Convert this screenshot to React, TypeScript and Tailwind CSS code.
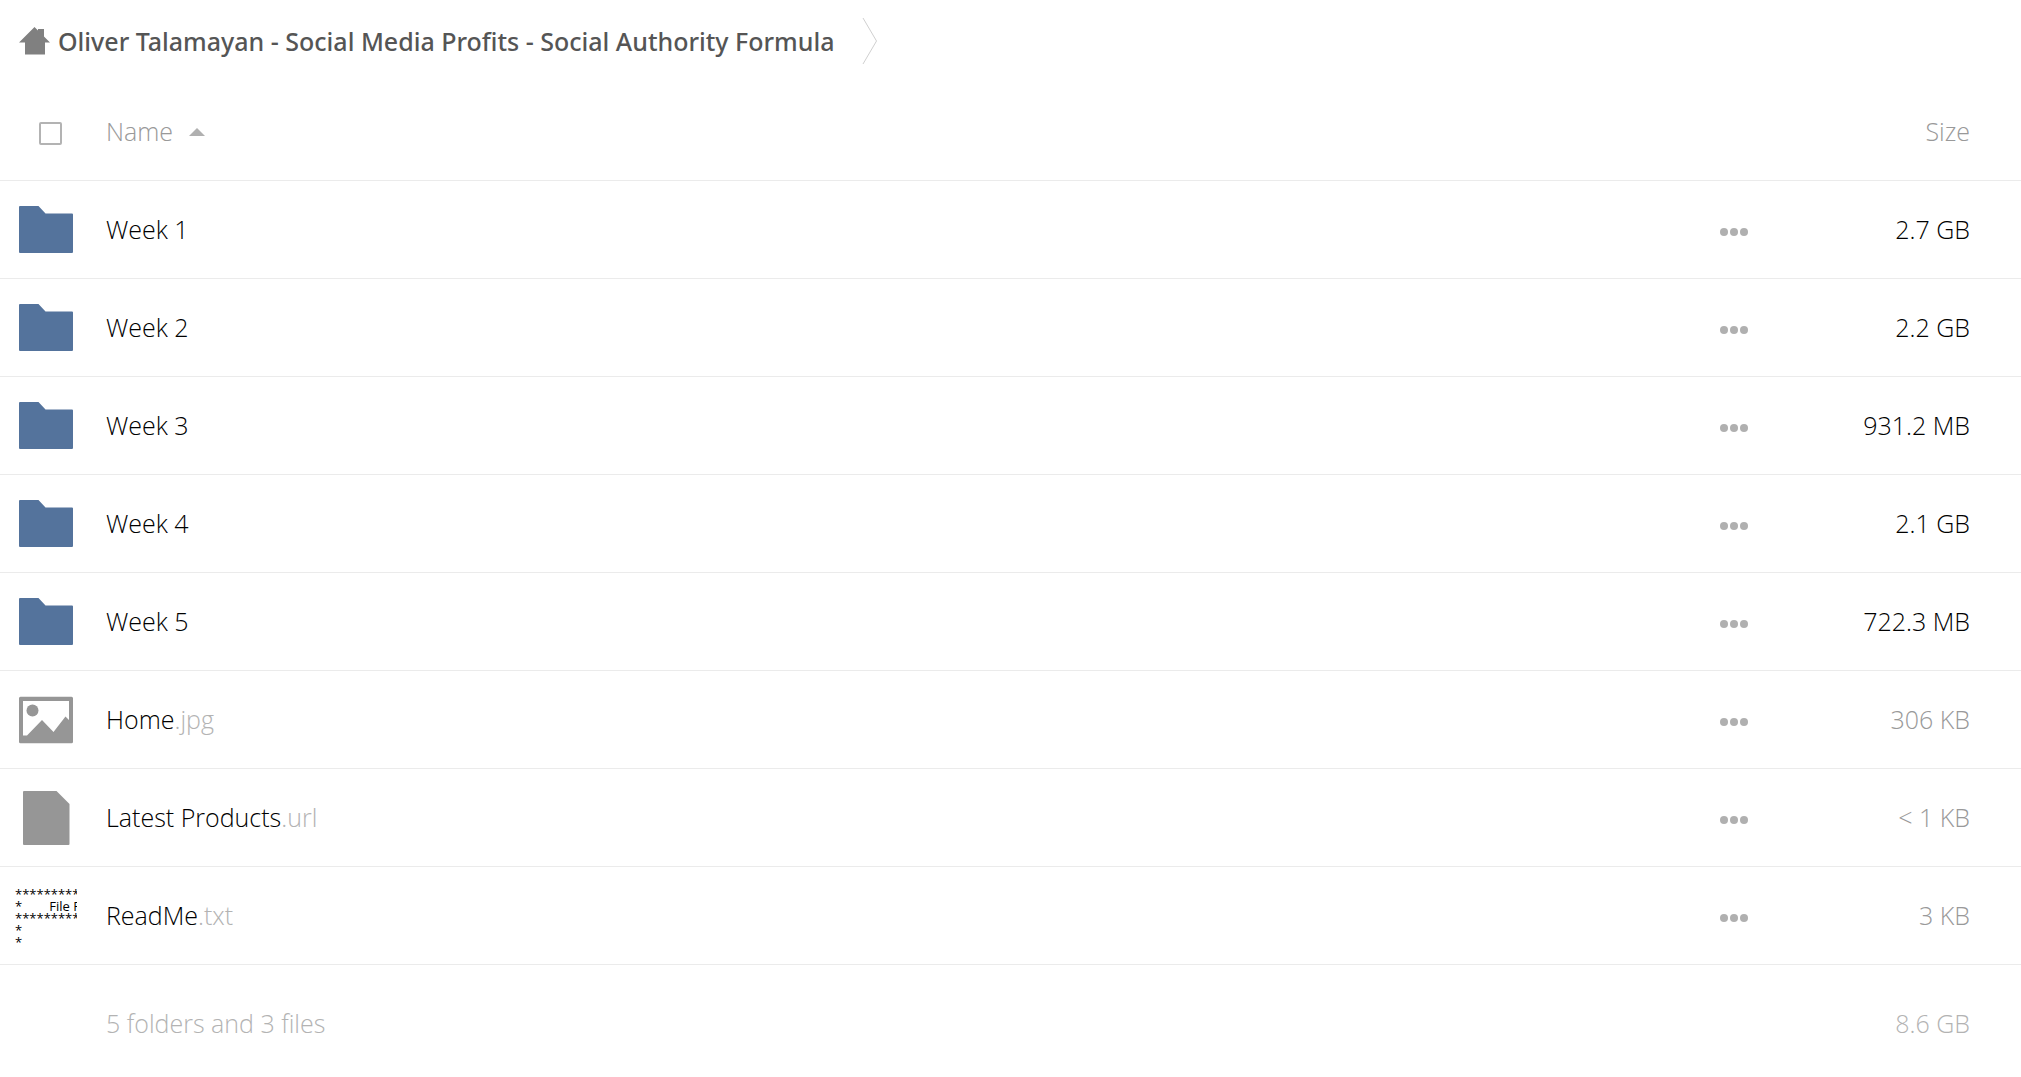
import React from "react";

type FileKind = "folder" | "image" | "file" | "text";

interface Entry {
  id: number;
  kind: FileKind;
  name: string;
  extension?: string;
  size: string;
}

const entries: Entry[] = [
  { id: 1, kind: "folder", name: "Week 1", size: "2.7 GB" },
  { id: 2, kind: "folder", name: "Week 2", size: "2.2 GB" },
  { id: 3, kind: "folder", name: "Week 3", size: "931.2 MB" },
  { id: 4, kind: "folder", name: "Week 4", size: "2.1 GB" },
  { id: 5, kind: "folder", name: "Week 5", size: "722.3 MB" },
  { id: 6, kind: "image", name: "Home", extension: ".jpg", size: "306 KB" },
  { id: 7, kind: "file", name: "Latest Products", extension: ".url", size: "< 1 KB" },
  { id: 8, kind: "text", name: "ReadMe", extension: ".txt", size: "3 KB" },
];

const textPreview = `*********
*        File F
*********
*
*`;

const HomeIcon: React.FC = () => (
  <svg width="31" height="28" viewBox="0 0 31 28" fill="#808080" aria-hidden="true">
    <path d="M15.500 0 19 3.500V2h6v7.500l6 6h-5V27.500H6V15.500H0z" />
  </svg>
);

const FolderIcon: React.FC = () => (
  <svg width="56" height="48" viewBox="0 0 56 48" fill="#54739c" aria-hidden="true">
    <path d="M2 0h18.500l7 7.500H54q1 0 1 1v37.500q0 1-1 1H2q-1 0-1-1V1q0-1 1-1z" />
  </svg>
);

const ImageIcon: React.FC = () => (
  <svg width="56" height="48" viewBox="0 0 56 48" fill="#969696" aria-hidden="true">
    <path
      fillRule="evenodd"
      d="M2.500.700h51q1.500 0 1.500 1.500v43.500q0 1.500-1.500 1.500h-51q-1.500 0-1.500-1.500V2.200q0-1.500 1.500-1.500zM5 5v34.500h4L24 24l11.500 12L47.500 20.500 51 24V5z"
    />
    <circle cx="14.500" cy="14.500" r="6" />
  </svg>
);

const DocumentIcon: React.FC = () => (
  <svg width="48" height="56" viewBox="0 0 48 56" fill="#969696" aria-hidden="true">
    <path d="M2 1h32.500L47.500 14v40q0 1-1 1H2q-1 0-1-1V2q0-1 1-1z" />
  </svg>
);

const TextThumbnail: React.FC = () => (
  <pre className="w-[62px] h-16 pt-1 overflow-hidden font-['Open_Sans',sans-serif] font-normal text-black text-[13px] leading-3">
    {textPreview}
  </pre>
);

const EntryIcon: React.FC<{ kind: FileKind }> = ({ kind }) => {
  if (kind === "folder") return <FolderIcon />;
  if (kind === "image") return <ImageIcon />;
  if (kind === "file") return <DocumentIcon />;
  return <TextThumbnail />;
};

const App: React.FC = () => {
  return (
    <div className="min-h-screen bg-white font-['Open_Sans',sans-serif] text-[25px] leading-9 font-light text-black">
      {/* Breadcrumb */}
      <nav aria-label="Breadcrumb" className="flex items-center h-[82px] pl-[19px]">
        <a
          href="#"
          className="flex items-center gap-2 font-['Noto_Sans',sans-serif] font-medium text-[#555]"
        >
          <HomeIcon />
          <span>Oliver Talamayan - Social Media Profits - Social Authority Formula</span>
        </a>
        <svg
          className="ml-7"
          width="16"
          height="48"
          viewBox="0 0 16 48"
          fill="none"
          stroke="#d0d0d0"
          aria-hidden="true"
        >
          <path d="M1 1 14.500 24 1 47" />
        </svg>
      </nav>

      <table className="w-full table-fixed border-separate border-spacing-0">
        <thead>
          <tr className="text-[#999]">
            <th className="w-[106px] h-[99px] border-b border-[#ebebeb]">
              <label className="flex justify-center pr-1.5">
                <input
                  type="checkbox"
                  aria-label="Select all"
                  className="appearance-none size-[23px] mt-1 rounded-xs border-2 border-[#b3b3b3] checked:bg-[#b3b3b3]"
                />
              </label>
            </th>
            <th className="border-b border-[#ebebeb] text-left font-light">
              <button type="button" className="flex items-center gap-4">
                Name
                <svg className="mt-0.5" width="16" height="8" viewBox="0 0 16 8" fill="#b0b0b0" aria-hidden="true">
                  <path d="M8 0l8 8H0z" />
                </svg>
              </button>
            </th>
            <th className="w-20 border-b border-[#ebebeb]" />
            <th className="w-[247px] border-b border-[#ebebeb] pr-[51px] text-right font-light">
              <button type="button">Size</button>
            </th>
          </tr>
        </thead>

        <tbody>
          {entries.map((entry) => (
            <tr key={entry.id}>
              <td className="h-[98px] border-b border-[#ebebeb]">
                <div className="flex justify-center w-[92px]">
                  <EntryIcon kind={entry.kind} />
                </div>
              </td>
              <td className="border-b border-[#ebebeb] pb-0.5">
                <a href="#">
                  {entry.name}
                  {entry.extension && <span className="text-[#b3b3b3]">{entry.extension}</span>}
                </a>
              </td>
              <td className="border-b border-[#ebebeb]">
                <button
                  type="button"
                  aria-label={`Actions for ${entry.name}`}
                  className="flex items-center justify-center w-full h-10 pt-1"
                >
                  <svg width="28" height="8" viewBox="0 0 28 8" fill="#b0b0b0" aria-hidden="true">
                    <circle cx="4" cy="4" r="4" />
                    <circle cx="14" cy="4" r="4" />
                    <circle cx="24" cy="4" r="4" />
                  </svg>
                </button>
              </td>
              <td
                className={`border-b border-[#ebebeb] pr-[51px] pb-0.5 text-right ${
                  entry.size.endsWith("KB") ? "text-[#999]" : "text-black"
                }`}
              >
                {entry.size}
              </td>
            </tr>
          ))}
        </tbody>

        <tfoot>
          <tr className="text-[#b3b3b3]">
            <td />
            <td className="pt-10">5 folders and 3 files</td>
            <td />
            <td className="pt-10 pr-[51px] text-right">8.6 GB</td>
          </tr>
        </tfoot>
      </table>
    </div>
  );
};

export default App;
